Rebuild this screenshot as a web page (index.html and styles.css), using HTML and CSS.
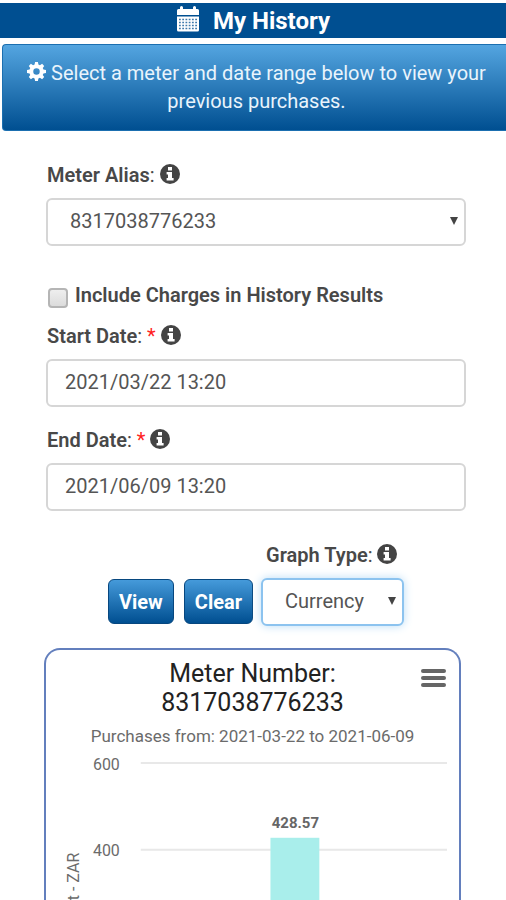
FILE: index.html
```html
<!DOCTYPE html>
<html lang="en">
<head>
<meta charset="utf-8">
<meta name="viewport" content="width=device-width, initial-scale=1">
<title>My History</title>
<link rel="stylesheet" href="styles.css">
</head>
<body>
<svg class="defs" aria-hidden="true">
  <symbol id="info" viewBox="0 0 20 20">
    <circle cx="10" cy="10" r="10" fill="#444"/>
    <path d="M8 3h4v3.400H8zM6.600 8H12v6h1.600v2.400H6.600V14H8v-3.600H6.600z" fill="#fff"/>
  </symbol>
</svg>
<header class="title-bar">
  <svg class="calendar" viewBox="0 0 24 26" aria-hidden="true">
    <path d="M1 9V4.500Q1 3 2.500 3H4V1.500Q4 0 5.500 0T7 1.500V3H17V1.500Q17 0 18.500 0T20 1.500V3H21.500Q23 3 23 4.500V9z" fill="#fff"/>
    <path d="M1 10.500H23V24Q23 25.500 21.500 25.500H2.500Q1 25.500 1 24z" fill="#fff"/>
    <path d="M3 13.500H21M3 16.500H21M3 19.500H21M3 22.500H21" stroke="#004f91" stroke-width="1.600" stroke-dasharray="1.800 1.440" opacity=".75"/>
  </svg>
  <h1>My History</h1>
</header>
<p class="notice">
  <svg class="gear" viewBox="0 0 20 20" aria-hidden="true">
    <path fill="#fff" fill-rule="evenodd" d="M8.500 0h3l.5 2.700 1.600.7L15.900 1.900l2.200 2.200-1.500 2.300.7 1.600 2.700.5v3l-2.700.5-.7 1.600 1.500 2.300-2.200 2.200-2.300-1.500-1.600.7-.5 2.700h-3L8 17.300l-1.600-.7-2.300 1.500-2.200-2.200 1.500-2.300-.7-1.600L0 11.500v-3L2.700 8l.7-1.600L1.900 4.100l2.200-2.200 2.300 1.500L8 2.700zM10 6.600a3.400 3.400 0 1 0 0 6.800 3.400 3.400 0 0 0 0-6.800z"/>
  </svg>
  Select a meter and date range below to view your previous purchases.
</p>
<main>
  <form>
    <div class="field meter">
      <label for="meter"><b>Meter Alias</b>: <svg class="info" aria-hidden="true"><use href="#info"/></svg></label>
      <span class="select-box"><select id="meter" class="control"><option>8317038776233</option></select></span>
    </div>
    <div class="check">
      <input type="checkbox" id="charges">
      <label for="charges"><b>Include Charges in History Results</b></label>
    </div>
    <div class="field">
      <label for="start"><b>Start Date</b>: <span class="required">*</span> <svg class="info" aria-hidden="true"><use href="#info"/></svg></label>
      <input id="start" class="control" type="text" value="2021/03/22 13:20">
    </div>
    <div class="field">
      <label for="end"><b>End Date</b>: <span class="required">*</span> <svg class="info" aria-hidden="true"><use href="#info"/></svg></label>
      <input id="end" class="control" type="text" value="2021/06/09 13:20">
    </div>
    <div class="actions">
      <button type="button">View</button>
      <button type="button">Clear</button>
      <div class="field graph">
        <label for="graph"><b>Graph Type</b>: <svg class="info" aria-hidden="true"><use href="#info"/></svg></label>
        <span class="select-box"><select id="graph" class="control active"><option>Currency</option></select></span>
      </div>
    </div>
  </form>
  <section class="chart">
    <div class="chart-head">
      <h2>Meter Number: 8317038776233</h2>
      <button type="button" class="menu" aria-label="Chart menu"><span></span><span></span><span></span></button>
    </div>
    <p class="subtitle">Purchases from: 2021-03-22 to 2021-06-09</p>
    <svg class="plot" viewBox="0 0 414 360" role="img" aria-label="Purchases by amount">
      <path d="M95 14H402M95 101H402M95 188H402M95 275H402" stroke="#e8e8e8" stroke-width="2"/>
      <text class="tick" x="74" y="21">600</text>
      <text class="tick" x="74" y="107">400</text>
      <text class="axis" transform="translate(33 104) rotate(-90)">Amount - ZAR</text>
      <rect x="225" y="89" width="49" height="186" fill="#a9eeeb"/>
      <text class="value" x="250" y="79">428.57</text>
    </svg>
  </section>
</main>
</body>
</html>
```
FILE: styles.css
```css
* {
  box-sizing: border-box;
}

body {
  margin: 0;
  height: 100vh;
  overflow: hidden;
  display: flex;
  flex-direction: column;
  background: #fff;
  color: #484848;
  font: 20px/24px Roboto, sans-serif;
}

.defs {
  display: none;
}

.title-bar {
  flex: none;
  display: flex;
  align-items: center;
  justify-content: center;
  gap: 13px;
  height: 35px;
  margin-top: 3px;
  background: #004f91;
}

.calendar {
  width: 24px;
  height: 26px;
  margin-bottom: 4px;
}

h1 {
  margin: 0;
  color: #fff;
  font-size: 24px;
  font-weight: 700;
}

.notice {
  flex: none;
  margin: 6px 0 0 2px;
  padding: 14px 12px 15px 16px;
  border: 1px solid #1b6fb0;
  border-right: 0;
  border-radius: 4px 0 0 4px;
  background: linear-gradient(#54a5e0, #004f91);
  color: #e9f4fc;
  font-size: 20px;
  line-height: 28px;
  text-align: center;
}

.gear {
  width: 19px;
  height: 19px;
  vertical-align: -1px;
}

main {
  flex: 1;
  min-height: 0;
  display: flex;
  flex-direction: column;
  padding: 32px 40px 0 46px;
}

form {
  flex: none;
}

.field {
  display: flex;
  flex-direction: column;
  gap: 11px;
  margin-bottom: 21px;
}

.field label {
  padding-left: 1px;
}

.field.meter {
  margin-bottom: 36px;
}

b {
  font-weight: 600;
}

.info {
  width: 20px;
  height: 20px;
  vertical-align: -2px;
}

.required {
  color: #f22;
}

.control {
  width: 100%;
  height: 48px;
  margin: 0;
  padding: 0 17px 2px;
  border: 2px solid #d6d6d6;
  border-radius: 6px;
  outline: 0;
  background: #fff;
  color: #555;
  font: inherit;
  appearance: none;
}

select.control {
  padding: 0 22px 2px;
}

.select-box {
  position: relative;
  display: block;
}

.select-box::after {
  content: "";
  position: absolute;
  right: 8px;
  top: 19px;
  border: 4px solid transparent;
  border-top: 8px solid #444;
  border-bottom: 0;
  pointer-events: none;
}

.check {
  display: flex;
  align-items: center;
  gap: 7px;
  margin-bottom: 16px;
}

.check input {
  appearance: none;
  width: 20px;
  height: 20px;
  margin: 6px 0 0 2px;
  border: 2px solid #b5b5b5;
  border-radius: 4px;
  background: linear-gradient(#eee, #dcdcdc);
}

.actions {
  display: flex;
  align-items: flex-end;
  justify-content: center;
  gap: 10px;
  margin-top: 32px;
  margin-bottom: 22px;
}

.actions button {
  height: 45px;
  margin-bottom: 2px;
  padding: 0 10px;
  border: 1px solid #07477f;
  border-radius: 6px;
  background: linear-gradient(#459ada, #004f91);
  color: #fff;
  font: 700 20px Roboto, sans-serif;
}

.graph {
  width: 143px;
  margin: 0 0 0 -2px;
}

.graph label {
  margin-left: 4px;
  white-space: nowrap;
}

.control.active {
  border-color: #8cc3ef;
  box-shadow: 0 0 10px #b9dcf6;
}

.chart {
  flex: 1;
  min-height: 0;
  overflow: hidden;
  margin: 0 5px 0 -2px;
  border: 2px solid #637fbd;
  border-bottom: 0;
  border-radius: 16px 16px 0 0;
}

.chart-head {
  position: relative;
  padding: 9px 80px 0;
}

h2 {
  margin: 0;
  color: #222;
  font-size: 25px;
  font-weight: 400;
  line-height: 29px;
  text-align: center;
}

.menu {
  position: absolute;
  right: 13px;
  top: 19px;
  display: flex;
  flex-direction: column;
  gap: 3px;
  width: 25px;
  padding: 0;
  border: 0;
  background: none;
}

.menu span {
  height: 4px;
  border-radius: 2px;
  background: #666;
}

.subtitle {
  margin: 8px 0 2px;
  color: #6b6b6b;
  font-size: 17px;
  line-height: 22px;
  text-align: center;
}

.plot {
  display: block;
  width: 100%;
}

.plot text {
  fill: #6b6b6b;
  font-size: 16px;
  text-anchor: end;
}

.plot .value {
  fill: #666;
  font-size: 15px;
  font-weight: 700;
  text-anchor: middle;
}
```
